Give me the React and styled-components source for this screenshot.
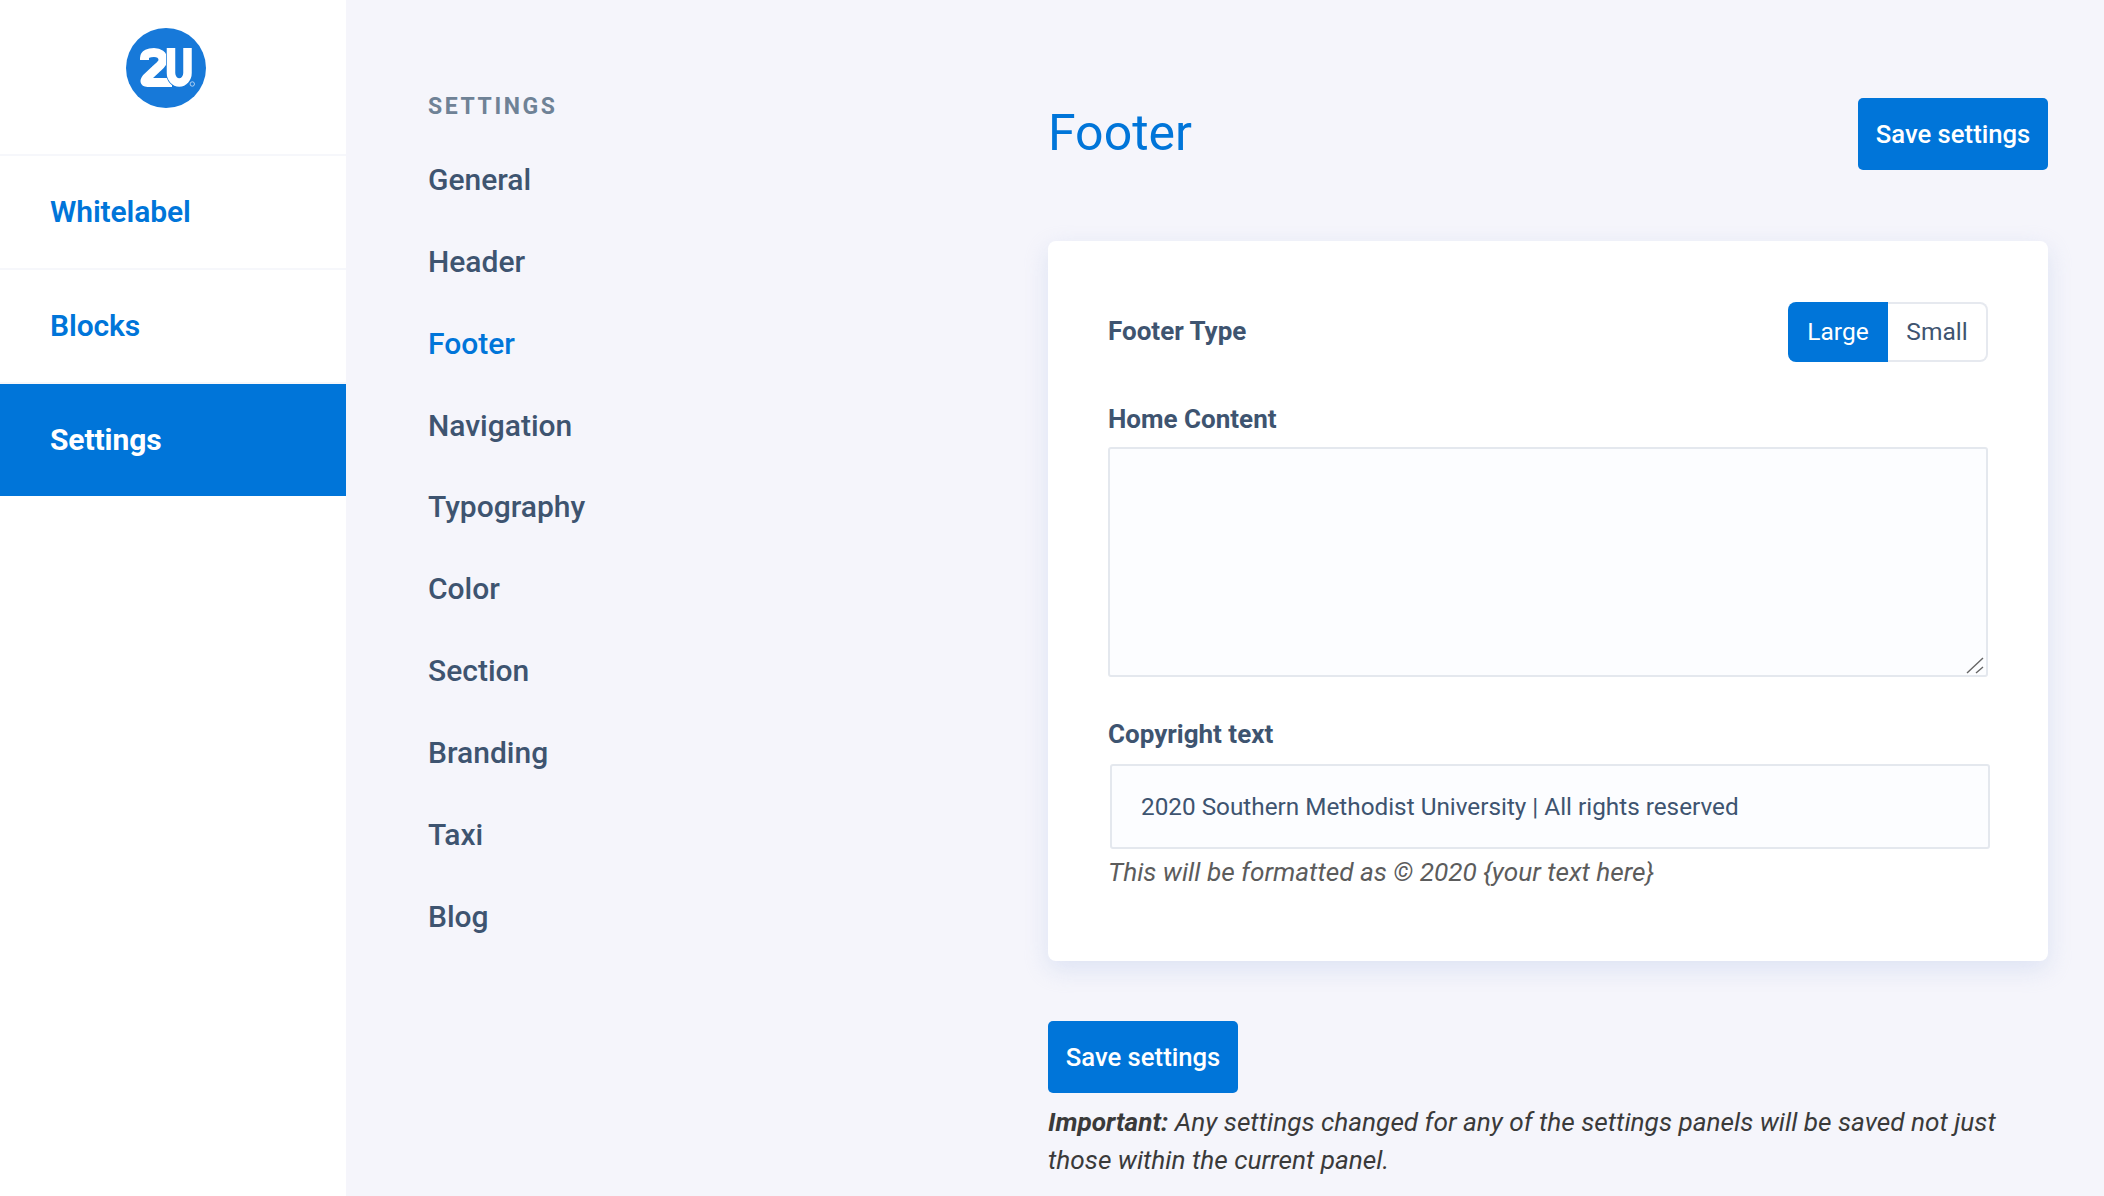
import React from "react";
import styled, { createGlobalStyle } from "styled-components";

const GlobalStyle = createGlobalStyle`
  html, body {
    margin: 0;
    height: 100%;
    overflow: hidden;
    background: #f5f5fb;
    font-family: Roboto, "Liberation Sans", sans-serif;
    color: #3e5470;
  }
  * { box-sizing: border-box; }
`;

const Page = styled.div`
  display: flex;
  height: 1196px;
  overflow: hidden;
`;

const Sidebar = styled.aside`
  width: 346px;
  flex: none;
  background: #fff;
`;

const LogoRow = styled.div`
  height: 156px;
  padding: 28px 14px 0 0;
  display: flex;
  justify-content: center;
  border-bottom: 2px solid #f6f7fb;
`;

const SideLink = styled.a`
  display: flex;
  align-items: center;
  height: ${(p) => (p.$active ? "112px" : "114px")};
  padding: 0 0 2px 50px;
  font-size: 30px;
  font-weight: ${(p) => (p.$active ? 700 : 600)};
  letter-spacing: -0.1px;
  color: ${(p) => (p.$active ? "#fff" : "#0075d9")};
  background: ${(p) => (p.$active ? "#0075d9" : "#fff")};
  border-bottom: ${(p) => (p.$active ? "none" : "2px solid #f6f7fb")};
`;

const SubNav = styled.nav`
  width: 702px;
  flex: none;
  padding: 93px 0 0 82px;
`;

const SubNavTitle = styled.div`
  font-size: 23px;
  line-height: 27px;
  font-weight: 700;
  letter-spacing: 2.6px;
  color: #6f8296;
  margin-bottom: 19px;
`;

const SubNavLink = styled.a`
  display: block;
  height: 81.85px;
  line-height: 81.85px;
  font-size: 30px;
  font-weight: 500;
  color: ${(p) => (p.$active ? "#0075d9" : "#3e5470")};
`;

const Main = styled.main`
  width: 1000px;
  flex: none;
  padding-top: 98px;
`;

const TitleRow = styled.div`
  display: flex;
  justify-content: space-between;
  align-items: flex-start;
  margin-bottom: 71px;
`;

const Title = styled.h1`
  margin: 0;
  font-size: 50px;
  line-height: 70px;
  font-weight: 400;
  color: #0075d9;
`;

const SaveButton = styled.button`
  display: block;
  width: 190px;
  height: 72px;
  padding: 0;
  border: none;
  border-radius: 5px;
  background: #0075d9;
  color: #fff;
  font-family: inherit;
  font-size: 25.7px;
  font-weight: 500;
`;

const Card = styled.section`
  height: 720px;
  padding: 61px 60px 60px;
  background: #fff;
  border-radius: 8px;
  box-shadow: 0 8px 24px rgba(190, 205, 235, 0.45);
  margin-bottom: 60px;
`;

const TypeRow = styled.div`
  display: flex;
  justify-content: space-between;
  align-items: center;
  height: 60px;
  margin-bottom: 41px;
`;

const FieldLabel = styled.label`
  display: block;
  font-size: 26px;
  line-height: 32px;
  font-weight: 700;
  color: #3e5470;
  margin-bottom: ${(p) => (p.$inRow ? "2px" : "0")};
`;

const Toggle = styled.div`
  display: flex;
  width: 200px;
  height: 60px;
`;

const ToggleOption = styled.div`
  flex: ${(p) => (p.$on ? "0 0 100px" : "1")};
  display: flex;
  align-items: center;
  justify-content: center;
  padding-bottom: 2px;
  font-size: 24.5px;
  color: ${(p) => (p.$on ? "#fff" : "#3e5470")};
  background: ${(p) => (p.$on ? "#0075d9" : "#fff")};
  border: ${(p) => (p.$on ? "none" : "2px solid #e6e9ef")};
  border-left: none;
  border-radius: ${(p) => (p.$on ? "8px 0 0 8px" : "0 8px 8px 0")};
`;

const AreaWrap = styled.div`
  position: relative;
  width: 880px;
  height: 230px;
  margin: 12px 0 41px;
`;

const Area = styled.textarea`
  display: block;
  width: 100%;
  height: 100%;
  resize: none;
  background: #fcfdff;
  border: 2px solid #e4e8ee;
  border-radius: 3px;
  outline: none;
`;

const ResizeGrip = styled.svg`
  position: absolute;
  right: 2px;
  bottom: 2px;
  width: 20px;
  height: 20px;
  pointer-events: none;
`;

const TextInput = styled.input`
  display: block;
  width: 880px;
  height: 85px;
  margin: 14px 0 0 2px;
  padding: 0 29px;
  background: #fcfdff;
  border: 2px solid #e4e8ee;
  border-radius: 3px;
  outline: none;
  font-family: inherit;
  font-size: 24.3px;
  color: #3e5470;
`;

const Hint = styled.p`
  margin: 7px 0 0;
  font-size: 26.2px;
  line-height: 32px;
  font-style: italic;
  color: #5c5c5c;
`;

const Notice = styled.p`
  margin: 10px 0 0;
  font-size: 26.2px;
  line-height: 38px;
  font-style: italic;
  color: #3a3a3a;
  strong { font-weight: 700; }
`;

const Logo = () => (
  <svg width="80" height="80" viewBox="0 0 80 80" aria-label="2U logo">
    <circle cx="40" cy="40" r="40" fill="#1779d9" />
    <path
      d="M18.5 32V30C18.5 26 23 24.5 28 24.5C33 24.5 37 27 37 32C37 36 33 38 29 42L20.5 50Q17 54.5 21.5 54.5H46"
      fill="none"
      stroke="#fff"
      strokeWidth="9"
    />
    <path d="M45 20V45a8.25 9.5 0 0 0 16.5 0V20" fill="none" stroke="#1779d9" strokeWidth="10" />
    <path d="M45 20V45a8.25 9.5 0 0 0 16.5 0V20" fill="none" stroke="#fff" strokeWidth="8.5" />
    <circle cx="66.3" cy="56" r="2.2" fill="none" stroke="#cfe3f7" strokeWidth="0.8" />
  </svg>
);

const sections = ["General", "Header", "Footer", "Navigation", "Typography", "Color", "Section", "Branding", "Taxi", "Blog"];

const App = () => {
  return (
    <Page>
      <GlobalStyle />
      <Sidebar>
        <LogoRow>
          <div><Logo /></div>
        </LogoRow>
        <SideLink>Whitelabel</SideLink>
        <SideLink>Blocks</SideLink>
        <SideLink $active>Settings</SideLink>
      </Sidebar>
      <SubNav>
        <SubNavTitle>SETTINGS</SubNavTitle>
        {sections.map((s) => (
          <SubNavLink key={s} $active={s === "Footer"}>{s}</SubNavLink>
        ))}
      </SubNav>
      <Main>
        <TitleRow>
          <Title>Footer</Title>
          <SaveButton>Save settings</SaveButton>
        </TitleRow>
        <Card>
          <TypeRow>
            <FieldLabel $inRow>Footer Type</FieldLabel>
            <Toggle>
              <ToggleOption $on>Large</ToggleOption>
              <ToggleOption>Small</ToggleOption>
            </Toggle>
          </TypeRow>
          <FieldLabel>Home Content</FieldLabel>
          <AreaWrap>
            <Area />
            <ResizeGrip viewBox="0 0 20 20">
              <path d="M1 18L17 3M10 18L17 12" stroke="#666" strokeWidth="1.4" fill="none" />
            </ResizeGrip>
          </AreaWrap>
          <FieldLabel>Copyright text</FieldLabel>
          <TextInput readOnly value="2020 Southern Methodist University | All rights reserved" />
          <Hint>This will be formatted as © 2020 {"{your text here}"}</Hint>
        </Card>
        <SaveButton>Save settings</SaveButton>
        <Notice>
          <strong>Important:</strong> Any settings changed for any of the settings panels will be saved not just those within the current panel.
        </Notice>
      </Main>
    </Page>
  );
};

export default App;
